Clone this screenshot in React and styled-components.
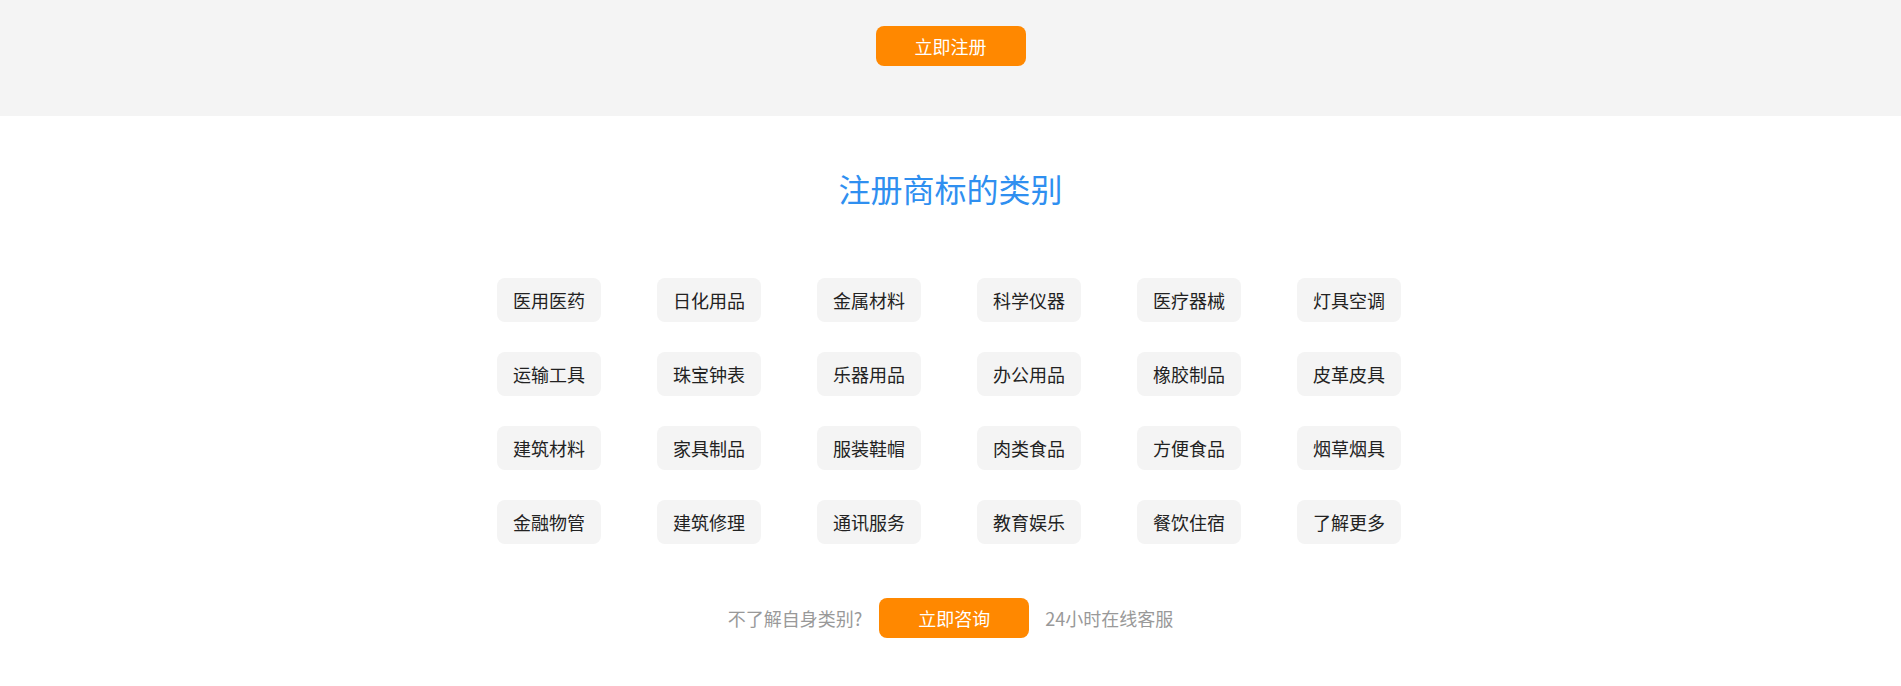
import React from "react";
import styled, { createGlobalStyle } from "styled-components";

const GlobalStyle = createGlobalStyle`
  html, body { margin: 0; padding: 0; background: #fff; }
  body { font-family: "Noto Sans CJK SC", "Noto Sans", sans-serif; }
  * { box-sizing: border-box; }
`;

const Page = styled.div`
  width: 100%;
  min-height: 686px;
  background: #fff;
`;

const TopBand = styled.div`
  height: 116px;
  background: #f4f4f4;
  display: flex;
  justify-content: center;
  padding-top: 26px;
`;

const OrangeButton = styled.button`
  width: 150px;
  height: 40px;
  border: none;
  border-radius: 8px;
  background: #ff8800;
  color: #fff;
  font-family: inherit;
  font-size: 18px;
  line-height: 40px;
  padding: 0;
  cursor: pointer;
  margin: ${(p) => p.$margin || "0"};
`;

const Section = styled.section`
  display: flex;
  flex-direction: column;
  align-items: center;
  padding-top: 52px;
`;

const Title = styled.h2`
  margin: 0;
  font-size: 32px;
  line-height: 40px;
  font-weight: 400;
  color: #2f8ff0;
`;

const TagGrid = styled.div`
  margin: 70px 3px 0 0;
  display: grid;
  grid-template-columns: repeat(6, 104px);
  column-gap: 56px;
  row-gap: 30px;
`;

const Tag = styled.div`
  height: 44px;
  border-radius: 8px;
  background: #f4f4f4;
  color: #222;
  font-size: 18px;
  line-height: 44px;
  text-align: center;
  white-space: nowrap;
`;

const ConsultRow = styled.div`
  margin-top: 54px;
  display: flex;
  align-items: center;
`;

const Hint = styled.span`
  font-size: 18px;
  color: #999;
  line-height: 40px;
`;

const tags = [
  "医用医药", "日化用品", "金属材料", "科学仪器", "医疗器械", "灯具空调",
  "运输工具", "珠宝钟表", "乐器用品", "办公用品", "橡胶制品", "皮革皮具",
  "建筑材料", "家具制品", "服装鞋帽", "肉类食品", "方便食品", "烟草烟具",
  "金融物管", "建筑修理", "通讯服务", "教育娱乐", "餐饮住宿", "了解更多",
];

export default function App() {
  return (
    <Page>
      <GlobalStyle />
      <TopBand>
        <OrangeButton>立即注册</OrangeButton>
      </TopBand>
      <Section>
        <Title>注册商标的类别</Title>
        <TagGrid>
          {tags.map((t) => (
            <Tag key={t}>{t}</Tag>
          ))}
        </TagGrid>
        <ConsultRow>
          <Hint>不了解自身类别?</Hint>
          <OrangeButton $margin="0 16px 0 17px">立即咨询</OrangeButton>
          <Hint>24小时在线客服</Hint>
        </ConsultRow>
      </Section>
    </Page>
  );
}
